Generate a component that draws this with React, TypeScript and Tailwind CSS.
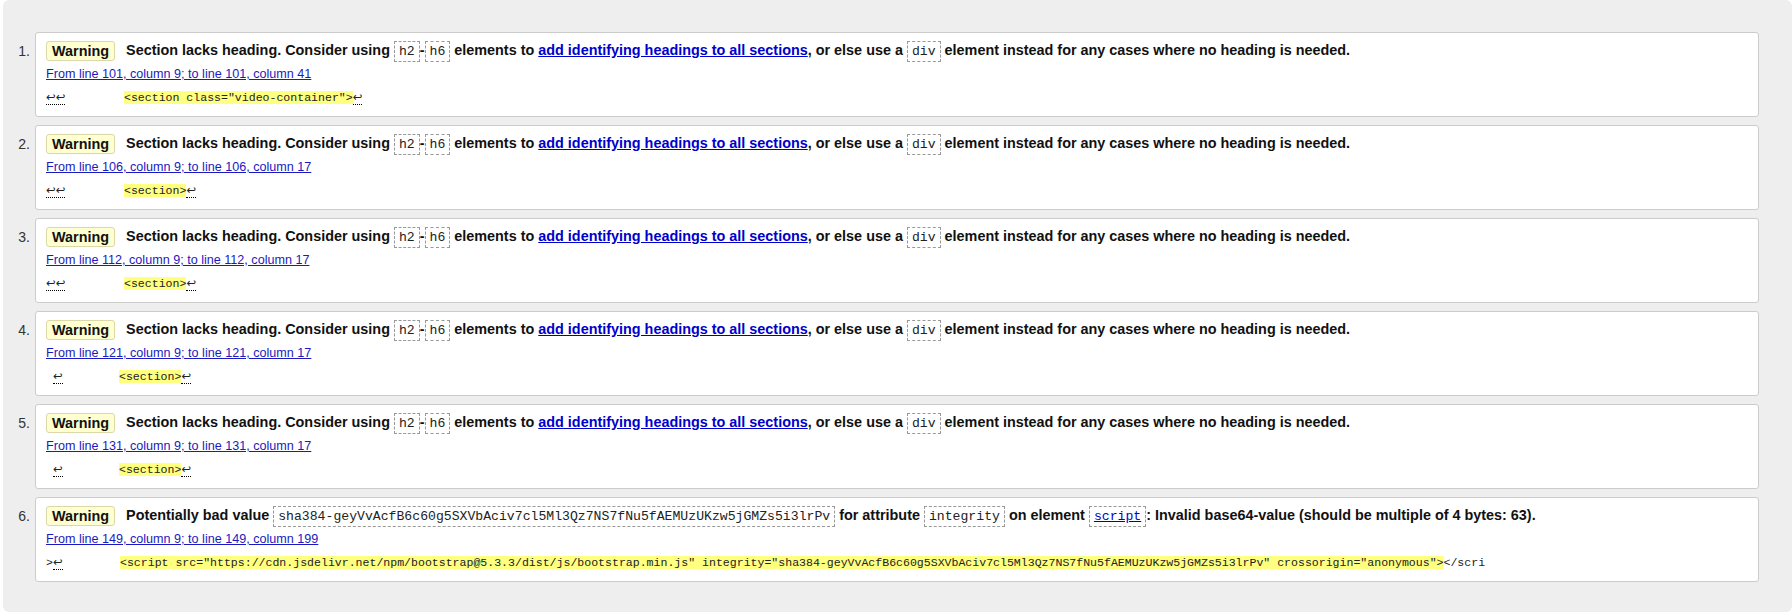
import React from "react";

const sans = "font-['Liberation_Sans',Arial,sans-serif]";
const mono = "font-['Liberation_Mono','DejaVu_Sans_Mono',monospace]";

function Code({ children }: { children: React.ReactNode }) {
  return (
    <code
      className={`${mono} inline-block h-[21px] border border-dashed border-[#999] px-[4px] align-middle text-[13.15px] font-normal leading-[19px] text-[#222]`}
    >
      {children}
    </code>
  );
}

function Nl({ children = "↩" }: { children?: React.ReactNode }) {
  return (
    <span className="border-b border-dotted border-black font-['DejaVu_Sans',sans-serif] text-[11.5px]">
      {children}
    </span>
  );
}

function Badge() {
  return (
    <span className="mr-[11px] inline-block h-[20px] rounded-[3px] border border-[#dcd7a8] bg-[#ffffd0] px-[5px] align-middle leading-[18px] text-[#111]">
      Warning
    </span>
  );
}

const sectionMsg = (
  <>
    Section lacks heading. Consider using <Code>h2</Code>-<Code>h6</Code> elements to{" "}
    <a href="#" className="text-[#0000cc] underline">
      add identifying headings to all sections
    </a>
    , or else use a <Code>div</Code> element instead for any cases where no heading is needed.
  </>
);

type Item = {
  msg: React.ReactNode;
  loc: string;
  pre: React.ReactNode;
  preW: string;
  mark: string;
  post: React.ReactNode;
};

const items: Item[] = [
  {
    msg: sectionMsg,
    loc: "From line 101, column 9; to line 101, column 41",
    pre: <Nl>↩↩</Nl>,
    preW: "w-[78px]",
    mark: '<section class="video-container">',
    post: <Nl />,
  },
  {
    msg: sectionMsg,
    loc: "From line 106, column 9; to line 106, column 17",
    pre: <Nl>↩↩</Nl>,
    preW: "w-[78px]",
    mark: "<section>",
    post: <Nl />,
  },
  {
    msg: sectionMsg,
    loc: "From line 112, column 9; to line 112, column 17",
    pre: <Nl>↩↩</Nl>,
    preW: "w-[78px]",
    mark: "<section>",
    post: <Nl />,
  },
  {
    msg: sectionMsg,
    loc: "From line 121, column 9; to line 121, column 17",
    pre: (
      <span className="pl-[7px]">
        <Nl />
      </span>
    ),
    preW: "w-[73px]",
    mark: "<section>",
    post: <Nl />,
  },
  {
    msg: sectionMsg,
    loc: "From line 131, column 9; to line 131, column 17",
    pre: (
      <span className="pl-[7px]">
        <Nl />
      </span>
    ),
    preW: "w-[73px]",
    mark: "<section>",
    post: <Nl />,
  },
  {
    msg: (
      <>
        Potentially bad value <Code>sha384-geyVvAcfB6c60g5SXVbAciv7cl5Ml3Qz7NS7fNu5fAEMUzUKzw5jGMZs5i3lrPv</Code> for
        attribute <Code>integrity</Code> on element{" "}
        <Code>
          <a href="#" className="text-[#0000cc] underline">
            script
          </a>
        </Code>
        : Invalid base64-value (should be multiple of 4 bytes: 63).
      </>
    ),
    loc: "From line 149, column 9; to line 149, column 199",
    pre: (
      <>
        &gt;
        <Nl />
      </>
    ),
    preW: "w-[74px]",
    mark:
      '<script src="https://cdn.jsdelivr.net/npm/bootstrap@5.3.3/dist/js/bootstrap.min.js" integrity="sha384-geyVvAcfB6c60g5SXVbAciv7cl5Ml3Qz7NS7fNu5fAEMUzUKzw5jGMZs5i3lrPv" crossorigin="anonymous">',
    post: "</scri",
  },
];

export default function App() {
  return (
    <div className={`${sans} h-[614px] bg-white pl-[3px]`}>
      <div className="h-[612px] rounded-md bg-[#eeeeee] pr-[33px] pt-[32px]">
        <ol className="flex flex-col gap-[8px]">
          {items.map((it, i) => (
            <li key={i} className="flex">
              <div className="w-[32px] shrink-0 pr-[5px] pt-[8px] text-right text-[14px] leading-[22px] text-[#333]">
                {i + 1}.
              </div>
              <div className="h-[85px] flex-1 rounded-[3px] border border-[#cccccc] bg-white pl-[10px] pt-[6px]">
                <div className="h-[22px] whitespace-nowrap text-[14.4px] font-bold leading-[22px] text-[#111]">
                  <Badge />
                  {it.msg}
                </div>
                <div className="h-[24px] pt-[1px] text-[12.6px] leading-[24px]">
                  <a href="#" className="text-[#1a1ac0] underline">
                    {it.loc}
                  </a>
                </div>
                <div className={`${mono} h-[22px] pt-[1px] whitespace-pre text-[11.55px] leading-[22px] text-[#222]`}>
                  <span className={`inline-block ${it.preW}`}>{it.pre}</span>
                  <mark className="bg-[#ffff80] text-[#222]">{it.mark}</mark>
                  {it.post}
                </div>
              </div>
            </li>
          ))}
        </ol>
      </div>
    </div>
  );
}
